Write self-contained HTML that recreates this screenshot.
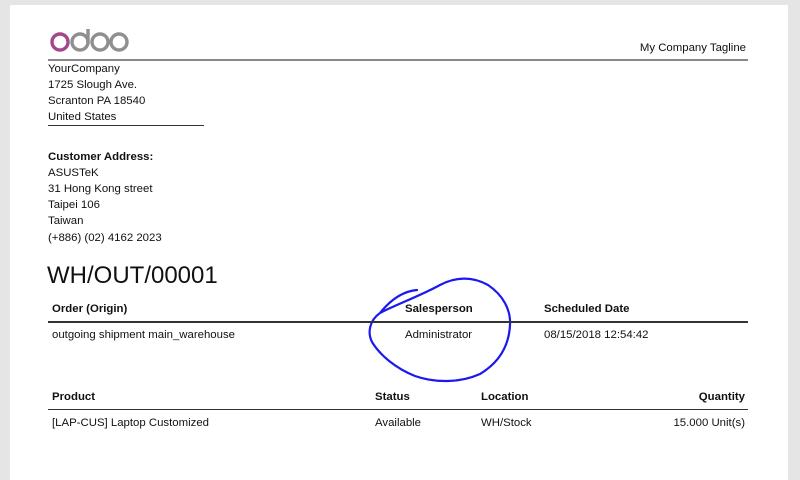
<!DOCTYPE html>
<html><head><style>
body{margin:0;width:800px;height:480px;background:#e5e5e5;overflow:hidden;font-family:"Liberation Sans",sans-serif;color:#111;}
.page{position:absolute;left:10px;top:5px;width:778px;height:475px;background:#fff;}
.t{position:absolute;font-size:11.4px;white-space:nowrap;line-height:14px;}
.b{font-weight:bold;}
.l{position:absolute;height:1px;}
</style></head><body>
<div class="page"></div>
<svg style="position:absolute;left:0;top:0" width="800" height="480">
<circle cx="60" cy="42" r="8" fill="none" stroke="#a3478a" stroke-width="3.4"/>
<circle cx="80" cy="42" r="8" fill="none" stroke="#8f8f8f" stroke-width="3.4"/>
<line x1="88" y1="29" x2="88" y2="44" stroke="#8f8f8f" stroke-width="3.4"/>
<circle cx="100" cy="42" r="8" fill="none" stroke="#8f8f8f" stroke-width="3.4"/>
<circle cx="119" cy="42" r="8" fill="none" stroke="#8f8f8f" stroke-width="3.4"/>
<path d="M417,290 C405,291 392,298 380,313 C395,305 420,296 440,285 C455,277 472,276 488,285 C503,295 511,310 510,325 C509,345 500,362 480,374 C460,383 435,383 415,376 C395,368 380,355 372,342 C367,332 370,320 380,313" fill="none" stroke="#1a1aee" stroke-width="2.2" stroke-linecap="round"/>
</svg>
<div class="l" style="left:48px;top:59px;width:700px;background:#888;height:2px"></div>
<div class="t" style="right:54px;top:41px">My Company Tagline</div>
<div class="t" style="left:48px;top:62px">YourCompany</div>
<div class="t" style="left:48px;top:78px">1725 Slough Ave.</div>
<div class="t" style="left:48px;top:94px">Scranton PA 18540</div>
<div class="t" style="left:48px;top:110px">United States</div>
<div class="l" style="left:48px;top:125px;width:156px;background:#333"></div>
<div class="t b" style="left:48px;top:150px">Customer Address:</div>
<div class="t" style="left:48px;top:166px">ASUSTeK</div>
<div class="t" style="left:48px;top:182px">31 Hong Kong street</div>
<div class="t" style="left:48px;top:198px">Taipei 106</div>
<div class="t" style="left:48px;top:214px">Taiwan</div>
<div class="t" style="left:48px;top:231px">(+886) (02) 4162 2023</div>
<div class="t" style="left:47px;top:262px;font-size:24px;line-height:28px">WH/OUT/00001</div>
<div class="t b" style="left:52px;top:302px">Order (Origin)</div>
<div class="t b" style="left:405px;top:302px">Salesperson</div>
<div class="t b" style="left:544px;top:302px">Scheduled Date</div>
<div class="l" style="left:48px;top:321px;width:700px;background:#333;height:2px"></div>
<div class="t" style="left:52px;top:328px">outgoing shipment main_warehouse</div>
<div class="t" style="left:405px;top:328px">Administrator</div>
<div class="t" style="left:544px;top:328px">08/15/2018 12:54:42</div>
<div class="t b" style="left:52px;top:390px">Product</div>
<div class="t b" style="left:375px;top:390px">Status</div>
<div class="t b" style="left:481px;top:390px">Location</div>
<div class="t b" style="right:55px;top:390px">Quantity</div>
<div class="l" style="left:48px;top:409px;width:700px;background:#333"></div>
<div class="t" style="left:52px;top:416px">[LAP-CUS] Laptop Customized</div>
<div class="t" style="left:375px;top:416px">Available</div>
<div class="t" style="left:481px;top:416px">WH/Stock</div>
<div class="t" style="right:55px;top:416px">15.000 Unit(s)</div>
</body></html>
